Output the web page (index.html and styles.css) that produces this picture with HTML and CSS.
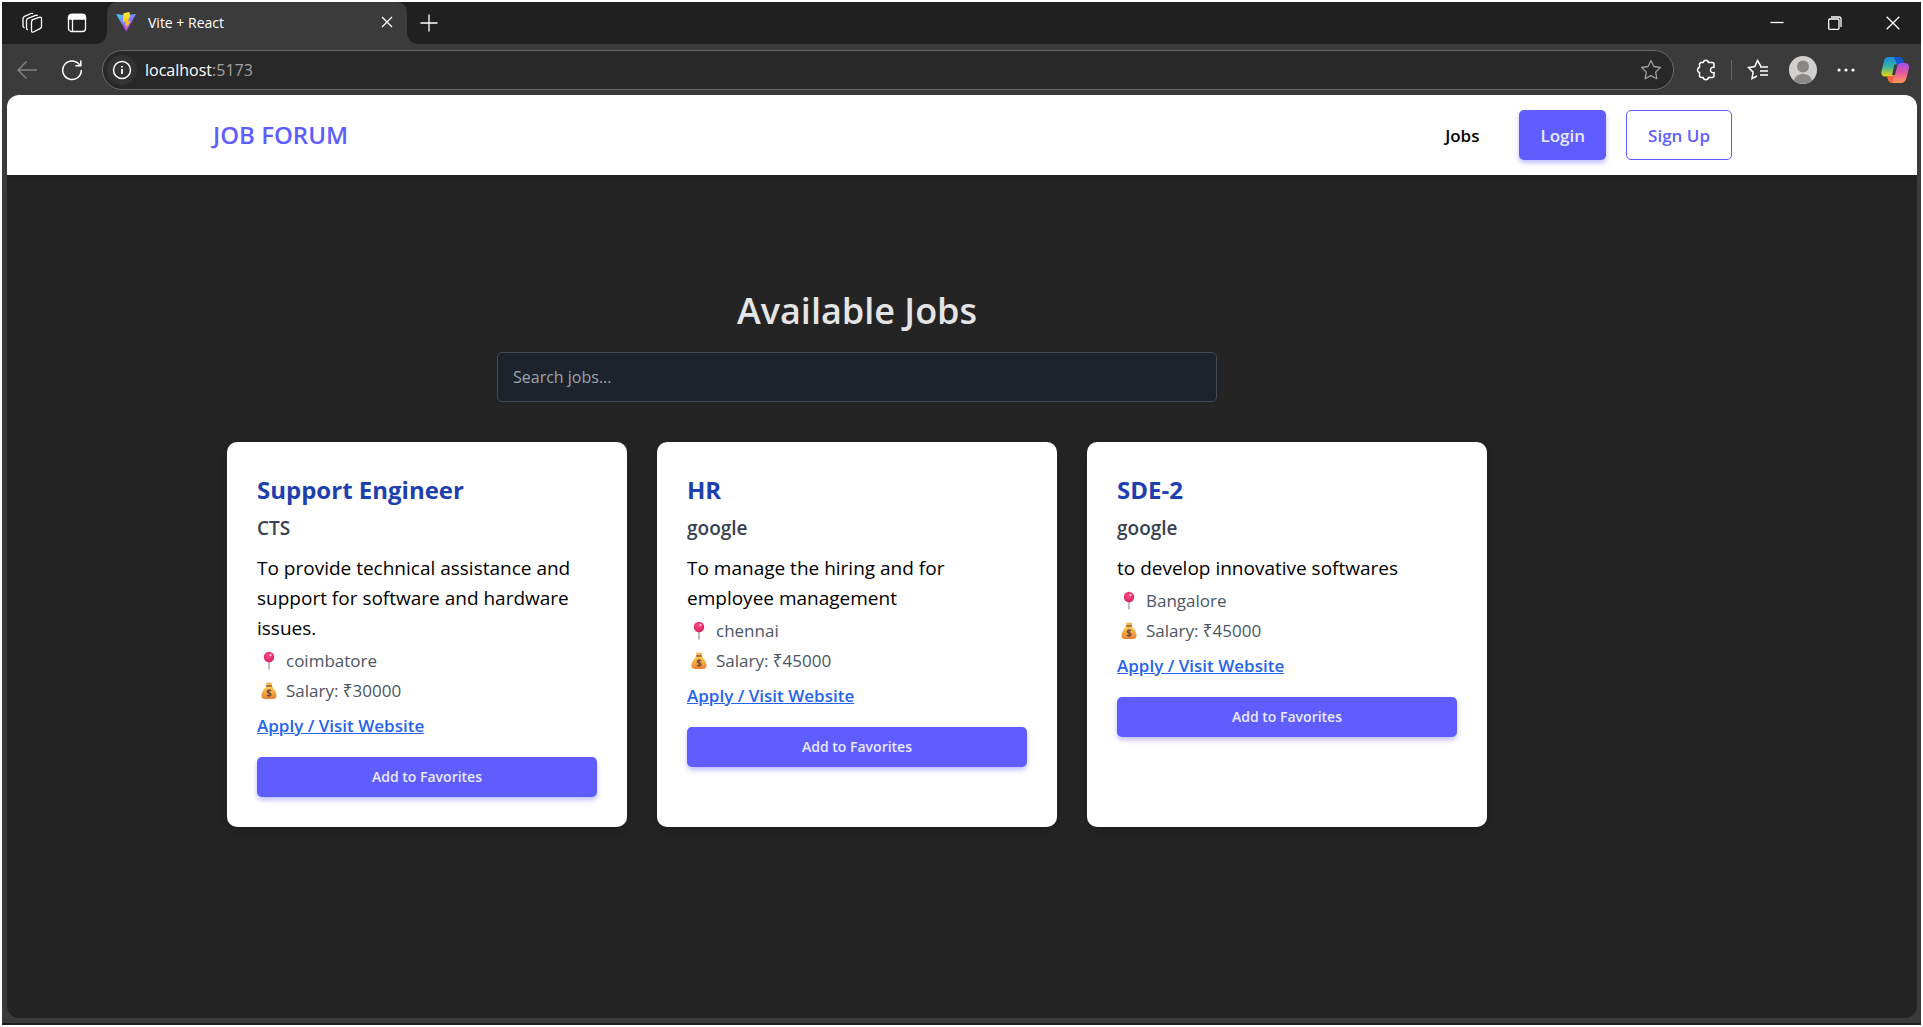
FILE: index.html
```html
<!DOCTYPE html>
<html lang="en">
<head>
<meta charset="utf-8">
<title>Vite + React</title>
<link rel="stylesheet" href="styles.css">
</head>
<body>
<svg class="defs" aria-hidden="true">
  <defs>
    <radialGradient id="pinFill" cx=".45" cy=".4" r=".6"><stop offset="0" stop-color="#ff4d84"/><stop offset="1" stop-color="#d9215c"/></radialGradient>
    <linearGradient id="bagFill" x1="0" y1="0" x2="0" y2="1"><stop offset="0" stop-color="#ffd04f"/><stop offset="1" stop-color="#e97f35"/></linearGradient>
    <linearGradient id="viteBlue" x1="0" y1="0" x2=".6" y2="1"><stop offset="0" stop-color="#41d1ff"/><stop offset="1" stop-color="#bd34fe"/></linearGradient>
    <linearGradient id="viteBolt" x1="0" y1="0" x2="0" y2="1"><stop offset="0" stop-color="#ffea3a"/><stop offset="1" stop-color="#ffa800"/></linearGradient>
    <linearGradient id="copA" x1="0" y1="0" x2="0" y2="1"><stop offset="0" stop-color="#1a8de8"/><stop offset=".5" stop-color="#34b3a0"/><stop offset="1" stop-color="#f5d30f"/></linearGradient>
    <linearGradient id="copB" x1="0" y1="0" x2="0" y2="1"><stop offset="0" stop-color="#a24df0"/><stop offset=".5" stop-color="#e8589a"/><stop offset="1" stop-color="#ff9a55"/></linearGradient>
    <symbol id="pin" viewBox="0 0 20 20"><path d="M10 9v9" stroke="#a99bb5" stroke-width="1.4" stroke-linecap="round"/><circle cx="10" cy="6" r="5.2" fill="url(#pinFill)"/><circle cx="11.5" cy="4" r="1.2" fill="#ffb3cc"/></symbol>
    <symbol id="bag" viewBox="0 0 20 20"><path d="M7 1.500 9 2l1-.8L11.500 2l2-.4L12 5H8z" fill="#f3b445"/><path d="M7.500 5h5C15 8 17.600 11 17.600 14.500c0 2.500-1.600 3.500-3.600 3.500H6c-2 0-3.600-1-3.600-3.500C2.400 11 5 8 7.500 5z" fill="url(#bagFill)"/><path d="M7.500 5h5" stroke="#9c5a34" stroke-width="1.500" stroke-linecap="round"/><path d="M12 9.800c-.8-.9-3.800-1-3.800.8 0 1.700 3.800 1 3.800 2.800 0 1.800-3.200 1.700-4 .7M10 8.200v7.600" fill="none" stroke="#704a3d" stroke-width="1.300"/></symbol>
  </defs>
</svg>
<div class="window">
  <header class="tabstrip">
    <div class="tabtools">
      <button class="icon" aria-label="Workspaces"><svg width="24" height="24" viewBox="0 0 24 24"><path d="M10.500 9.200 18 6.300Q20.500 5.500 20.500 8v7.500q0 1.500-1.500 2.200l-6.500 3.300q-2 .8-2-1.500v-8.500q0-1.300 1.300-1.900zM7 18.500q-1.500.3-1.500-1.500V9.500Q5.500 8 7 7.400l7.500-3q1.500-.5 2 .6M3.500 16.500Q2 16.500 2 15V7.500Q2 6 3.500 5.300L10 2.500q1.500-.5 2 .5"/></svg></button>
      <button class="icon" aria-label="Tab actions"><svg width="20" height="20" viewBox="0 0 20 20"><rect x="1.500" y="1.500" width="17" height="17" rx="3"/><path d="M1.500 4.500a3 3 0 0 1 3-3h11a3 3 0 0 1 3 3V6h-17z" fill="currentColor"/><path d="M5.500 6v12"/></svg></button>
    </div>
    <div class="tab">
      <svg width="22" height="22" viewBox="0 0 22 22"><path d="M1 3 10 4.300 21 3 11.300 20.500z" fill="url(#viteBlue)"/><path d="m14.500 1-6 1.200-.7 9 3-.6-.8 4 1.800-.5L11 18l4.800-8-3 .5L15 5z" fill="url(#viteBolt)"/></svg>
      <span class="tabtitle">Vite + React</span>
      <button class="icon" aria-label="Close tab"><svg width="12" height="12" viewBox="0 0 12 12"><path d="m1 1 10 10M11 1 1 11"/></svg></button>
    </div>
    <button class="icon newtab" aria-label="New tab"><svg width="18" height="18" viewBox="0 0 18 18"><path d="M9 .5v17M.5 9h17"/></svg></button>
    <div class="wincontrols">
      <button class="icon" aria-label="Minimize"><svg width="14" height="14" viewBox="0 0 14 14"><path d="M.5 6.500h13"/></svg></button>
      <button class="icon" aria-label="Restore"><svg width="14" height="14" viewBox="0 0 14 14"><rect x=".7" y="3" width="10.300" height="10.300" rx="1"/><path d="M3 1h8q2 0 2 2v8"/></svg></button>
      <button class="icon" aria-label="Close"><svg width="14" height="14" viewBox="0 0 14 14"><path d="m.7.7 12.600 12.600M13.300.7.7 13.300"/></svg></button>
    </div>
  </header>
  <div class="toolbar">
    <button class="icon dim" aria-label="Back"><svg width="22" height="20" viewBox="0 0 22 20"><path d="M21 10H2M10.500 1.500 2 10l8.500 8.500"/></svg></button>
    <button class="icon" aria-label="Refresh"><svg width="22" height="22" viewBox="0 0 22 22"><path d="M19 6.500A9.300 9.300 0 1 0 20.300 11M19.800 1.500v5.300h-5.300" stroke-width="1.500"/></svg></button>
    <div class="address">
      <button class="icon info" aria-label="Site information"><svg width="20" height="20" viewBox="0 0 20 20"><circle cx="10" cy="10" r="8.500" stroke-width="1.500"/><path d="M10 9v5M10 6v1.600" stroke-width="1.800"/></svg></button>
      <span class="url">localhost<span class="port">:5173</span></span>
      <button class="icon star" aria-label="Add to favorites bar"><svg width="22" height="22" viewBox="0 0 22 22"><path d="m11 1.500 2.900 6 6.500 1-4.700 4.600 1.100 6.600-5.800-3.100-5.800 3.100 1.100-6.600L1.600 8.500l6.500-1z" stroke-linejoin="round"/></svg></button>
    </div>
    <div class="actions">
      <button class="icon" aria-label="Extensions"><svg width="20" height="22" viewBox="0 0 20 22"><path d="M4 3.500h3.200a2.700 2.700 0 0 1 5.300 0H16q2 0 2 2v2.800a2.800 2.800 0 1 0 0 5.400v2.800q0 2-2 2h-3.500a2.700 2.700 0 0 1-5.300 0H5.500q-2 0-2-2v-3a2.700 2.700 0 0 1 0-5.200v-3q0-1.800 2-1.800" stroke-width="1.500"/></svg></button>
      <span class="divider"></span>
      <button class="icon" aria-label="Favorites"><svg width="22" height="22" viewBox="0 0 22 22"><path d="M14 7.500 10.500 1.500l-2.700 6-6.300 1 4.600 4.600L5 19.700l5-2.700M13 8h8M13 12h8M13 16h8" stroke-width="1.500"/></svg></button>
      <button class="icon" aria-label="Profile"><svg class="avatar" width="28" height="28" viewBox="0 0 28 28"><circle cx="14" cy="14" r="14" fill="#d2d0ce"/><circle cx="14" cy="10.500" r="6" fill="#8a8886"/><path d="M5 24.500C6 20 10 18 14 18s8 2 9 6.500A14 14 0 0 1 5 24.500z" fill="#8a8886"/></svg></button>
      <button class="icon" aria-label="Settings and more"><svg width="18" height="4" viewBox="0 0 18 4"><g fill="currentColor" stroke="none"><circle cx="2" cy="2" r="1.600"/><circle cx="9" cy="2" r="1.600"/><circle cx="16" cy="2" r="1.600"/></g></svg></button>
      <button class="icon copilot" aria-label="Copilot"><svg width="28" height="28" viewBox="0 0 28 28"><g stroke="none"><path d="M8 1h9.500q3.500 0 4.500 4l1 3h-4q-2 0-3 3l-2.500 6q-1 3.500-4 3.500H4Q-.5 20 .5 15L3 5q1-4 5-4z" fill="url(#copA)"/><path d="M13 1h4.500q3.500 0 4.500 4l1 3h-4q-1.500 0-2.500 2z" fill="#1555d0"/><path d="M20 7h4q4.500 0 4 5l-2.500 10q-1.500 5-5 5h-9q-3.500 0-4.500-4l-1-2.500h4q2 0 3-3L16 11q1-4 4-4z" fill="url(#copB)"/><path d="M6 20.500h4q2 0 3-2l-1.500 8.500q-3.500 0-4.500-4z" fill="#f4623a"/><path d="M13.500 8.500h3L14 19h-3z" fill="#3b3b3b"/></g></svg></button>
    </div>
  </div>
  <div class="viewport">
    <nav class="nav">
      <a class="brand" href="#">JOB FORUM</a>
      <div class="navlinks">
        <a class="navlink" href="#">Jobs</a>
        <button class="btn primary">Login</button>
        <button class="btn outline">Sign Up</button>
      </div>
    </nav>
    <main class="main">
      <h1>Available Jobs</h1>
      <input class="search" type="text" placeholder="Search jobs..." aria-label="Search jobs">
      <div class="cards">
        <article class="card">
          <h2>Support Engineer</h2>
          <h3>CTS</h3>
          <p class="desc">To provide technical assistance and support for software and hardware issues.</p>
          <p class="meta"><svg width="20" height="20"><use href="#pin"/></svg>coimbatore</p>
          <p class="meta"><svg width="20" height="20"><use href="#bag"/></svg>Salary: ₹30000</p>
          <a class="apply" href="#">Apply / Visit Website</a>
          <button class="favorite">Add to Favorites</button>
        </article>
        <article class="card">
          <h2>HR</h2>
          <h3>google</h3>
          <p class="desc">To manage the hiring and for employee management</p>
          <p class="meta"><svg width="20" height="20"><use href="#pin"/></svg>chennai</p>
          <p class="meta"><svg width="20" height="20"><use href="#bag"/></svg>Salary: ₹45000</p>
          <a class="apply" href="#">Apply / Visit Website</a>
          <button class="favorite">Add to Favorites</button>
        </article>
        <article class="card">
          <h2>SDE-2</h2>
          <h3>google</h3>
          <p class="desc">to develop innovative softwares</p>
          <p class="meta"><svg width="20" height="20"><use href="#pin"/></svg>Bangalore</p>
          <p class="meta"><svg width="20" height="20"><use href="#bag"/></svg>Salary: ₹45000</p>
          <a class="apply" href="#">Apply / Visit Website</a>
          <button class="favorite">Add to Favorites</button>
        </article>
      </div>
    </main>
  </div>
</div>
</body>
</html>
```

FILE: styles.css
```css
* { box-sizing: border-box; }
body {
  margin: 0;
  padding: 2px;
  background: #fff;
  font-family: "Open Sans", "Noto Sans", sans-serif;
}
h1, h2, h3, p { margin: 0; }
button { border: 0; font-family: inherit; cursor: pointer; }
a { text-decoration: none; }
.defs { position: absolute; width: 0; height: 0; }

.window {
  display: flex;
  flex-direction: column;
  min-height: calc(100vh - 4px);
  background: #3b3b3b;
  border-bottom: 2px solid #1c1e1f;
}
.icon {
  display: flex;
  align-items: center;
  justify-content: center;
  padding: 0;
  background: none;
  color: #fff;
}
.icon svg { fill: none; stroke: currentColor; stroke-width: 1.3; }
.icon .avatar { stroke: none; }

/* Tab strip */
.tabstrip { display: flex; height: 42px; background: #202020; }
.tabtools { display: flex; align-items: center; gap: 22px; width: 105px; padding-left: 19px; }
.tab {
  position: relative;
  display: flex;
  align-items: center;
  width: 300px;
  padding: 0 14px 2px 8px;
  border-radius: 10px 10px 0 0;
  background: #3b3b3b;
  color: #fff;
}
/* Curved feet where the active tab meets the toolbar */
.tab::before, .tab::after {
  content: "";
  position: absolute;
  bottom: 0;
  width: 10px;
  height: 10px;
}
.tab::before { right: 100%; background: radial-gradient(circle at 0 0, #202020 9px, #3b3b3b 10px); }
.tab::after { left: 100%; background: radial-gradient(circle at 100% 0, #202020 9px, #3b3b3b 10px); }
.tabtitle { flex: 1; padding-left: 11px; font-size: 14px; }
.newtab { width: 44px; }
.wincontrols { display: flex; gap: 44px; margin-left: auto; padding-right: 21px; }

/* Toolbar */
.toolbar { display: flex; align-items: center; height: 51px; padding: 0 12px 0 14px; }
.toolbar > .icon { margin-right: 23px; }
.toolbar > .icon + .icon { margin-right: 19px; }
.dim { color: #858585; }
.address {
  display: flex;
  flex: 1;
  align-items: center;
  height: 40px;
  padding: 0 11px 0 4px;
  border: 1px solid #6a6a6a;
  border-radius: 20px;
  background: #282828;
}
.info { width: 30px; height: 30px; border-radius: 15px; background: #333; }
.url { flex: 1; padding-left: 8px; color: #fff; font-size: 16px; }
.port { color: #a0a0a0; }
.star { color: #a0a0a0; }
.actions { display: flex; align-items: center; gap: 20px; padding-left: 22px; }
.divider { width: 1px; height: 20px; margin: 0 -5px; background: #666; }
.copilot { margin-left: 6px; }

/* Page */
.viewport {
  flex: 1;
  margin: 0 4px 5px 5px;
  overflow: hidden;
  border-radius: 12px;
  background: #242424;
}
.nav {
  display: flex;
  align-items: center;
  justify-content: space-between;
  height: 80px;
  padding: 0 185px 0 206px;
  background: #fff;
  box-shadow: 0 4px 10px rgba(0, 0, 0, .15);
}
.brand { color: #605dff; font-size: 24px; font-weight: 600; line-height: 36px; }
.navlinks { display: flex; align-items: center; gap: 20px; }
.navlink { margin-right: 20px; color: #000; font-size: 17px; font-weight: 600; }
.btn { height: 50px; padding: 0 21px; border-radius: 5px; font-size: 17px; font-weight: 600; }
.primary { background: #605dff; color: #e9e9ff; box-shadow: 0 3px 5px rgba(96, 93, 255, .4); }
.outline { border: 1px solid #605dff; background: #fff; color: #605dff; }

.main {
  display: flex;
  flex-direction: column;
  align-items: center;
  max-width: 1260px;
  margin: 106px 0 0 220px;
}
h1 { color: #e5e5e5; font-size: 36px; font-weight: 600; line-height: 60px; }
.search {
  width: 100%;
  max-width: 720px;
  height: 50px;
  margin: 11px 0 40px;
  padding: 0 15px;
  border: 1px solid #414a52;
  border-radius: 5px;
  background: #1d232a;
  color: #e5e5e5;
  font-family: inherit;
  font-size: 16px;
}
.search::placeholder { color: #9ca3af; }
.cards { display: grid; grid-template-columns: repeat(3, 1fr); gap: 30px; width: 100%; }
.card {
  display: flex;
  flex-direction: column;
  padding: 30px;
  border-radius: 10px;
  background: #fff;
  color: #000;
  box-shadow: 0 4px 10px rgba(0, 0, 0, .2);
}
h2 { margin-bottom: 5px; color: #1e40af; font-size: 24px; font-weight: 700; line-height: 36px; }
h3 { margin-bottom: 10px; color: #374151; font-size: 19px; font-weight: 600; line-height: 30px; }
.desc { margin-bottom: 3px; font-size: 19px; line-height: 30px; }
.meta { display: flex; align-items: center; gap: 7px; padding-left: 2px; color: #4b5563; font-size: 17px; line-height: 30px; }
.apply {
  align-self: flex-start;
  margin: 5px 0 16px;
  color: #2563eb;
  font-size: 17px;
  font-weight: 600;
  line-height: 30px;
  text-decoration: underline;
}
.favorite {
  height: 40px;
  padding-bottom: 3px;
  border-radius: 5px;
  background: #605dff;
  color: #e9e9ff;
  font-size: 14px;
  font-weight: 600;
  box-shadow: 0 3px 5px rgba(96, 93, 255, .4);
}
```
